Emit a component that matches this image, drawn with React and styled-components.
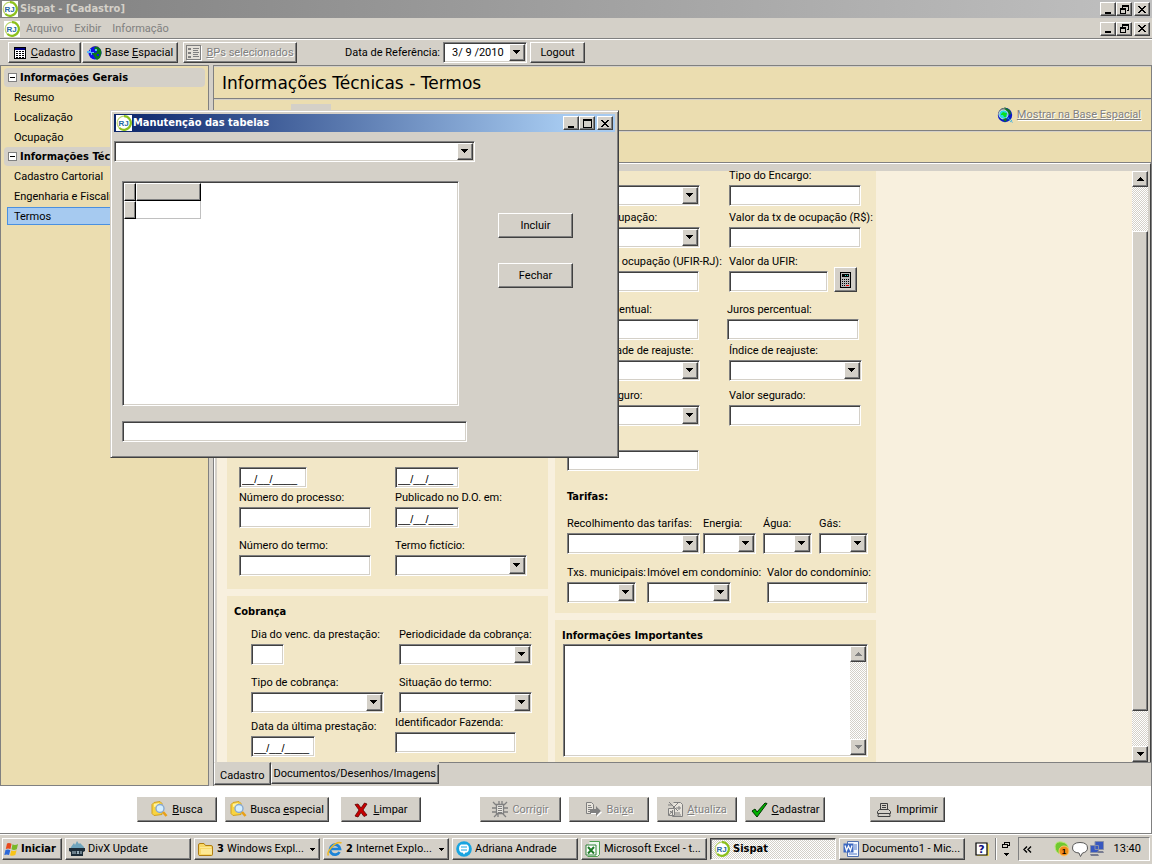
import React from 'react';
import styled, { createGlobalStyle, css } from 'styled-components';

const face = '#d4d0c8';
const sand = '#ebddb0';
const uiFont = 'Roboto, "Liberation Sans", sans-serif';
const boldFont = '"DejaVu Sans Condensed", "DejaVu Sans", sans-serif';

const GlobalStyle = createGlobalStyle`
  *, *::before, *::after {
    box-sizing: border-box;
  }

  body {
    margin: 0;
    background: ${face};
    color: #000;
    font: 11px/14px ${uiFont};
  }

  button, input, select, textarea {
    font: inherit;
    color: inherit;
    border-radius: 0;
    margin: 0;
  }
`;

const raised = css`
  border: 1px solid;
  border-color: #fff #404040 #404040 #fff;
  box-shadow: inset -1px -1px 0 #808080;
  background: ${face};
`;

const sunken = css`
  border: 1px solid;
  border-color: #808080 #fff #fff #808080;
  box-shadow: inset 1px 1px 0 #404040, inset -1px -1px 0 ${face};
  background: #fff;
`;

const checker = css`
  background: repeating-conic-gradient(#fff 0% 25%, ${face} 0% 50%) 0 0 / 2px 2px;
`;

const Screen = styled.div`
  display: flex;
  flex-direction: column;
  height: 100vh;
  min-height: 640px;
  position: relative;
  overflow: hidden;
`;

/* ---------- window chrome ---------- */

const TitleBar = styled.header`
  display: flex;
  align-items: center;
  height: 18px;
  padding: 0 2px;
  gap: ${props => props.$active ? 1 : 2}px;
  background: ${props => props.$active
    ? 'linear-gradient(90deg, #0a246a, #a6caf0 90%)'
    : 'linear-gradient(90deg, #808080, #c0c0c0)'};
  color: ${props => props.$active ? '#fff' : face};
`;

const TitleText = styled.h1`
  flex: 1;
  margin: 0;
  font: bold 11px/18px ${boldFont};
`;

const WindowButtons = styled.div`
  display: flex;

  button:last-child {
    margin-left: 2px;
  }
`;

const WindowButton = styled.button`
  ${raised}
  width: 16px;
  height: 14px;
  padding: 0;
  display: grid;
  place-items: center;
`;

const MenuBar = styled.nav`
  display: flex;
  align-items: center;
  gap: 1px;
  height: 22px;
  padding: 0 2px 0 4px;
  border-bottom: 1px solid #fff;
  box-shadow: inset 0 -1px 0 #808080;
`;

const MenuItem = styled.button`
  border: 0;
  padding: 0 5px;
  background: none;
  color: #808080;
`;

const Spacer = styled.div`
  flex: 1;
`;

const Toolbar = styled.div`
  display: flex;
  align-items: center;
  height: 25px;
  padding-left: 8px;
`;

const Button = styled.button`
  ${raised}
  display: inline-flex;
  align-items: center;
  justify-content: center;
  flex: none;
  gap: ${props => props.$gap || 5}px;
  width: ${props => props.$width}px;
  height: ${props => props.$height || 25}px;
  padding: 0;
  white-space: nowrap;

  &:disabled {
    color: #808080;
    text-shadow: 1px 1px 0 #fff;
  }
`;

const ToolGroup = styled.div`
  display: flex;
  align-items: center;
  gap: ${props => props.$gap || 1}px;
  margin-left: ${props => props.$space || 0}px;
`;

/* ---------- form controls ---------- */

const Field = styled.label`
  display: flex;
  flex-direction: column;
  gap: 2px;
  padding-top: ${props => props.$drop ? 4 : 0}px;
  white-space: nowrap;
`;

const TextInput = styled.input`
  ${sunken}
  width: ${props => props.$width}px;
  height: 21px;
  padding: 3px 2px 1px;
  font: 11px/15px "Liberation Sans", sans-serif;
`;

const SelectBox = styled.span`
  display: block;
  position: relative;
  width: ${props => props.$width}px;
  height: 21px;

  svg {
    ${raised}
    position: absolute;
    top: 2px;
    right: 2px;
    width: 16px;
    height: 17px;
    pointer-events: none;
  }
`;

const NativeSelect = styled.select`
  ${sunken}
  appearance: none;
  display: block;
  width: 100%;
  height: 100%;
  padding: 0 20px 0 8px;
  outline: 0;
`;

const Select = ({ width, options = [''], label, id }) => (
  <SelectBox $width={width}>
    <NativeSelect aria-label={label} id={id}>
      {options.map(o => <option key={o}>{o}</option>)}
    </NativeSelect>
    <svg viewBox="0 0 14 15" shapeRendering="crispEdges"><path d="M3 5h7v1h-1v1h-1v1h-1v1h-1v-1h-1v-1h-1v-1h-1z" /></svg>
  </SelectBox>
);

/* ---------- body ---------- */

const Main = styled.main`
  display: grid;
  grid-template-columns: 209px minmax(0, 1fr);
  column-gap: 4px;
  flex: 1;
  min-height: 0;
`;

const Sidebar = styled.aside`
  border: 1px solid #808080;
  background: ${sand};
  padding: 2px 3px;
`;

const NavGroup = styled.nav`
  margin-bottom: -1px;
`;

const GroupTitle = styled.h2`
  display: flex;
  align-items: center;
  gap: 3px;
  height: 19px;
  margin: 0;
  padding-left: 4px;
  border-radius: 4px;
  background: ${face};
  font: bold 11px/14px ${boldFont};
  white-space: nowrap;
`;

const NavItem = styled.a`
  display: block;
  height: 18px;
  margin: 1px 0 2px 3px;
  padding: 0 6px;
  border: 1px solid ${props => props.$selected ? '#4a90e0' : 'transparent'};
  background: ${props => props.$selected ? '#a6caf0' : 'none'};
  color: #000;
  line-height: 17px;
  text-decoration: none;
  white-space: nowrap;
`;

const Content = styled.section`
  display: flex;
  flex-direction: column;
  min-height: 0;
  border: 1px solid #808080;
  border-bottom: 0;
`;

const Band = styled.div`
  display: flex;
  align-items: center;
  gap: 4px;
  height: 32px;
  padding: 0 10px 0 8px;
  background: ${sand};
  border-bottom: 1px solid #808080;
  box-shadow: inset 0 1px 0 ${face};
`;

const TitleBand = styled(Band)`
  height: 33px;
  padding-top: 2px;
`;

const PageTitle = styled.h2`
  margin: 0;
  font: 17px/24px "DejaVu Sans", sans-serif;
`;

const BandTile = styled.span`
  align-self: flex-start;
  width: 40px;
  height: 26px;
  margin: 5px 0 0 69px;
  background: ${face};
`;

const MapLink = styled.a`
  color: #808080;
  text-shadow: 1px 1px 0 #fff;
`;

const FormPane = styled.div`
  display: flex;
  flex: 1;
  min-height: 0;
  border-top: 1px solid #fff;
  border-left: 1px solid #fff;
  border-right: 1px solid #404040;
  padding: 7px 2px 0;
`;

const Form = styled.form`
  display: flex;
  align-items: stretch;
  gap: 7px;
  flex: 1;
  min-width: 0;
  padding-left: 10px;
  background: #f8f0de;
  overflow: hidden;
`;

const Column = styled.div`
  display: flex;
  flex-direction: column;
  flex: none;
  gap: 7px;
  width: 321px;
  margin-top: -2px;
`;

const Card = styled.div`
  display: flex;
  flex-direction: column;
  justify-content: ${props => props.$end ? 'flex-end' : 'flex-start'};
  flex: ${props => props.$grow ? 1 : 'none'};
  min-height: ${props => props.$tall ? 420 : 0}px;
  padding: ${props => props.$pad};
  background: #f2e7c7;
`;

const CardTitle = styled.h3`
  margin: ${props => props.$space || 0}px 0 0;
  font: bold 11px/14px ${boldFont};
`;

const Row = styled.div`
  display: grid;
  grid-template-columns: ${props => props.$cols};
  align-items: ${props => props.$top ? 'start' : 'end'};
  margin-top: ${props => props.$space || 0}px;
  margin-left: ${props => props.$indent || 0}px;
`;

const Memo = styled.div`
  ${sunken}
  display: flex;
  width: 305px;
  height: 113px;
  margin: 1px 0 0 1px;
  padding: 1px;

  textarea {
    flex: 1;
    min-width: 0;
    border: 0;
    padding: 2px;
    resize: none;
    background: none;
  }
`;

const ScrollTrack = styled.div`
  ${checker}
  display: flex;
  flex-direction: column;
  justify-content: space-between;
  width: 16px;
`;

const ScrollButton = styled.button`
  ${raised}
  width: 16px;
  height: 16px;
  padding: 0;
  display: grid;
  place-items: center;
`;

const ScrollThumb = styled.div`
  ${raised}
  flex: 1;
  margin-top: 44px;
  margin-bottom: 35px;
`;

const ScrollBar = ({ thumb, disabled }) => {
  const color = disabled ? '#808080' : '#000';
  return (
    <ScrollTrack>
      <ScrollButton type="button" disabled={disabled} aria-label="▲">
        <svg width="7" height="4" shapeRendering="crispEdges"><path fill={color} d="M3 0h1v1h1v1h1v1h1v1H0V3h1V2h1V1h1z" /></svg>
      </ScrollButton>
      {thumb && <ScrollThumb />}
      <ScrollButton type="button" disabled={disabled} aria-label="▼">
        <svg width="7" height="4" shapeRendering="crispEdges"><path fill={color} d="M0 0h7v1H6v1H5v1H4v1H3V3H2V2H1V1H0z" /></svg>
      </ScrollButton>
    </ScrollTrack>
  );
};

const Tabs = styled.div`
  display: flex;
  align-items: flex-start;
  height: 24px;
`;

const Tab = styled.button`
  flex: none;
  padding: ${props => props.$active ? '4px 5px 0' : '0 2px'};
  background: ${face};
  border: 1px solid;
  border-color: ${face} #404040 #404040 #fff;
  box-shadow: inset -1px -1px 0 #808080;
  height: ${props => props.$active ? 23 : 20}px;
  margin-top: ${props => props.$active ? 0 : 2}px;
`;

const TabRest = styled.div`
  flex: 1;
  border-top: 1px solid #808080;
  box-shadow: inset 0 1px 0 #404040;
`;

const Footer = styled.footer`
  display: flex;
  align-items: center;
  height: 48px;
  padding-left: 137px;
  background: #fff;
  border-bottom: 1px solid #808080;
  border-right: 1px solid #808080;

  button {
    border-top-color: ${face};
    border-left-color: ${face};
  }
`;

/* ---------- dialog ---------- */

const Dialog = styled.div`
  position: absolute;
  left: 110px;
  top: 110px;
  width: 509px;
  padding: 3px;
  border: 1px solid;
  border-color: ${face} #404040 #404040 ${face};
  box-shadow: inset 1px 1px 0 #fff, inset -1px -1px 0 #808080;
  background: ${face};
`;

const DialogBody = styled.div`
  padding: 9px 0 12px;
`;

const DialogMiddle = styled.div`
  display: flex;
  gap: 39px;
  padding: 19px 0 15px 8px;
`;

const DialogActions = styled.div`
  display: flex;
  flex-direction: column;
  gap: 25px;
  padding-top: 32px;
`;

const DialogFoot = styled.div`
  padding-left: 8px;
`;

const GridBox = styled.div`
  ${sunken}
  width: 337px;
  height: 225px;
  padding: 1px;
`;

const Grid = styled.table`
  border-collapse: separate;
  border-spacing: 0;

  th {
    ${raised}
    height: 18px;
    padding: 0;
    border-color: #fff #000 #000 #fff;
  }

  th:first-child {
    width: 12px;
  }

  th + th {
    width: 65px;
  }

  td {
    padding: 0;
    border: solid #c0c0c0;
    border-width: 0 1px 1px 0;
  }
`;

/* ---------- taskbar ---------- */

const Taskbar = styled.div`
  display: flex;
  align-items: center;
  height: 30px;
  padding: 0 2px;
  gap: 3px;
  box-shadow: inset 0 1px 0 #fff;
`;

const Task = styled.button`
  ${raised}
  ${props => props.$pressed && css`
    border-color: #404040 #fff #fff #404040;
    box-shadow: inset 1px 1px 0 #808080;
    ${checker}
  `}
  display: flex;
  align-items: center;
  flex: 0 1 126px;
  min-width: 0;
  gap: 3px;
  height: 22px;
  padding: 0 4px 0 3px;
  white-space: nowrap;

  b {
    font: bold 11px/14px ${boldFont};
  }

  svg {
    flex: none;
  }

  span {
    flex: 1;
    overflow: hidden;
    text-align: left;
  }
`;

const StartButton = styled(Task)`
  flex: none;
  width: 60px;
  padding: 0 1px;
  gap: 1px;
`;

const TrayTools = styled.div`
  display: flex;
  align-items: center;
  flex: 1;
  justify-content: flex-end;
  gap: 5px;
`;

const Divider = styled.i`
  width: 2px;
  height: 22px;
  border-left: 1px solid #808080;
  border-right: 1px solid #fff;
`;

const Tray = styled.div`
  display: flex;
  align-items: center;
  gap: 2px;
  width: 132px;
  height: 24px;
  margin-left: 4px;
  padding: 0 8px 0 4px;
  border: 1px solid;
  border-color: #808080 #fff #fff #808080;
`;

const Clock = styled.time`
  margin-left: 6px;
  font-size: 11px;
`;

/* ---------- icons ---------- */

const LogoIcon = ({ bare }) => (
  <svg width="16" height="16" viewBox="0 0 16 16">
    {!bare && <rect width="16" height="16" fill="#fff" />}
    <circle cx="8" cy="8" r="6.8" fill="#fff" stroke="#bcd670" strokeWidth="1.2" />
    <path d="M8 1.2A6.8 6.8 0 1 1 3.400 13" fill="none" stroke="#8cc01c" strokeWidth="2.2" />
    <text x="7.500" y="10.800" textAnchor="middle" fontFamily="Liberation Sans" fontWeight="bold" fontSize="8" fill="#2868a4">RJ</text>
  </svg>
);

const glyphs = {
  min: <path d="M2 8h6v2H2z" />,
  max: <path fillRule="evenodd" d="M1 1h9v9H1zM2 3v6h7V3z" />,
  restore: <path fillRule="evenodd" d="M3 1h7v6H8V6h1V3H4v1H3zM1 4h6v6H1zM2 6v3h4V6z" />,
  close: <path d="M1 2h2v1h1v1h2V3h1V2h2v1H8v1H7v1H6v1h1v1h1v1h1v1H7V8H6V7H4v1H3v1H1V8h1V7h1V6h1V5H3V4H2V3H1z" />,
};

const Controls = ({ middle }) => (
  <WindowButtons>
    {['min', middle, 'close'].map(name => (
      <WindowButton key={name} type="button" aria-label={name}>
        <svg width="11" height="11" viewBox="0 0 11 11" shapeRendering="crispEdges">{glyphs[name]}</svg>
      </WindowButton>
    ))}
  </WindowButtons>
);

const TableIcon = () => (
  <svg width="12" height="12" shapeRendering="crispEdges">
    <path fill="#fff" d="M0 0h12v12H0z" />
    <path fill="#000080" d="M0 0h12v3H0z" />
    <path fill="none" stroke="#000" d="M.5 .5h11v11H.5z" />
    <path fill="#000" d="M2 4h2v1H2zM5 4h2v1H5zM8 4h2v1H8zM2 6h2v1H2zM5 6h2v1H5zM8 6h2v1H8zM2 8h2v1H2zM5 8h2v1H5zM8 8h2v1H8zM2 10h2v1H2zM5 10h2v1H5zM8 10h2v1H8z" />
  </svg>
);

const GlobeIcon = () => (
  <svg width="16" height="16" viewBox="0 0 16 16">
    <path fill="#585858" d="M3 4Q6 0 11 1.500l3 3-1 1H4z" />
    <circle cx="8" cy="8" r="6.500" fill="#1010e8" />
    <path fill="#087818" d="M8 2l3 0 3 3 .5 3-1.500 5-3 2-2-2-1.500-3L5 9l1-2 2 1 2-1-1-2-2-1z" />
    <path fill="#58b8f8" d="M0 6h3V4h1v3h3v1H5v2H4V8H0zM8 4h2v2H8z" />
    <path fill="#1010e8" d="M10 9h2v2h-2z" />
  </svg>
);

const GlobeSearchIcon = () => (
  <svg width="16" height="16" viewBox="0 0 16 16">
    <circle cx="8" cy="8" r="7.200" fill="#0818c8" />
    <path fill="#107820" d="M4 2l4-1.500L13 3l1 4-2 1-2-4-6 1z" />
    <path fill="#808080" d="M1 8Q1 2 7 1l2 1-6 4z" />
    <circle cx="6.500" cy="7.500" r="4.500" fill="#28d8e0" stroke="#c8dce0" />
    <path fill="#08e020" d="M4 7l2-2 3 1h1l-1 4H7L6 8H4z" />
    <path fill="#107820" d="M6 12l3-1 1 2-2 2z" />
    <path stroke="#18a8e8" strokeWidth="2" strokeDasharray="1 1" d="M11 11l4.500 4.500" />
  </svg>
);

const ListIcon = () => (
  <svg width="16" height="16" shapeRendering="crispEdges">
    <path d="M1.5 1.5h14v14h-14z" fill="none" stroke="#fff" />
    <path d="M.5 .5h14v14H.5z" fill="#e4e0d8" stroke="#808080" strokeWidth="1" />
    <path fill="#808080" d="M2 3h3v2H2zM2 7h3v2H2zM2 11h3v2H2zM7 3h6v1H7zM7 5h5v1H7zM7 7h6v1H7zM7 9h5v1H7zM7 11h6v1H7z" />
  </svg>
);

const SearchIcon = () => (
  <svg width="17" height="17" viewBox="0 0 17 17">
    <path d="M3 1.500l6-1 2 2v11l-8 1-2-2v-9z" fill="#f8d440" stroke="#d0a020" />
    <path d="M3 3l5-1v3L3 6z" fill="#fff2a0" />
    <circle cx="9" cy="7.500" r="4" fill="#d4efff" stroke="#88a8d0" strokeWidth="1.400" />
    <path d="M12 11l3.500 4" stroke="#e8a018" strokeWidth="2.600" />
  </svg>
);

const CrossIcon = () => (
  <svg width="14" height="16" viewBox="0 0 14 16">
    <path d="M1 2.500l3-.5 3 4 3.500-5 2.500 1-4 6 4 5-3 1.500-3-4-3 4.500-3-1 4-6z" fill="#c80000" stroke="#600000" strokeWidth=".8" />
  </svg>
);

const CheckIcon = () => (
  <svg width="17" height="16" viewBox="0 0 17 16">
    <path d="M1 9l3-2 2 3 8-9 2 .5L6 15z" fill="#00b000" stroke="#003800" />
  </svg>
);

const GearPageIcon = () => (
  <svg width="16" height="17" viewBox="0 0 16 17">
    <path fill="#eceae4" stroke="#808080" strokeWidth="1.300" d="M4.500 3.500h7v9h-7z" />
    <path fill="none" stroke="#808080" strokeWidth="1.300" d="M1 1l3 3M15 1l-3 3M0 7h4M12 7h4M0 11h4M12 11h4M2 16l3-3M14 16l-3-3M7 0v3M10 0v3M6 16v-3" />
    <path stroke="#808080" d="M6 5.500h4M6 7.500h4M6 9.500h4M6 11.500h4" />
  </svg>
);

const ExportIcon = () => (
  <svg width="17" height="15" viewBox="0 0 17 15">
    <path fill="#e8e4dc" stroke="#808080" d="M1.500 .5h5l2 2v9h-7z" />
    <path stroke="#808080" d="M3 3.500h3M3 5.500h4M3 7.500h4M3 9.500h2" />
    <path fill="#fff" d="M6 8h6V5l5 5.500-5 4.500v-3H6z" />
    <path fill="#808080" d="M5 7h6V4l5 5-5 5v-3H5z" />
  </svg>
);

const RefreshPageIcon = () => (
  <svg width="17" height="17" viewBox="0 0 17 17">
    <path fill="#e8e4dc" stroke="#808080" d="M6.500 1.500h7l2 2v12h-10v-6M1.500 7.500h6v7h-6z" />
    <path fill="none" stroke="#808080" d="M2 1l9 9M11 2L5 8M1 4h4M8 12h5M9 7h5M12 5v4M3 10l3 3M6 9l-4 5M8 14h6" />
  </svg>
);

const PrinterIcon = () => (
  <svg width="14" height="14" viewBox="0 0 14 14" fill="none" stroke="#404040">
    <path d="M3.500 6.500v-6h7v6M5 2.500h4M5 4.500h4M2.500 6.500h9l2 2v2H.5v-2zM2.500 10.500L1 11.500v2h12v-2l-1.500-1" />
  </svg>
);

const CalculatorIcon = () => (
  <svg width="11" height="16" shapeRendering="crispEdges">
    <rect x=".5" y=".5" width="10" height="15" rx="1" fill="#b8b8b8" stroke="#000" />
    <path fill="#000" d="M2 2h7v3H2z" />
    <path fill="#20d8c8" d="M5 3h1v1H5zM7 3h1v1H7z" />
    <path fill="#000" d="M2 7h1v1H2zM4 7h1v1H4zM6 7h1v1H6zM8 7h1v1H8zM2 9h1v1H2zM4 9h1v1H4zM6 9h1v1H6zM8 9h1v1H8zM2 11h1v1H2zM4 11h1v1H4zM6 11h1v1H6zM8 11h1v1H8zM2 13h1v1H2zM4 13h1v1H4z" />
    <path fill="#e00" d="M6 13h3v1H6z" />
  </svg>
);

const ToggleIcon = () => (
  <svg width="9" height="9" shapeRendering="crispEdges">
    <path fill="#fff" stroke="#808080" d="M.5 .5h8v8h-8z" />
    <path fill="#000" d="M2 4h5v1H2z" />
  </svg>
);

const WindowsIcon = () => (
  <svg width="16" height="15" viewBox="0 0 16 15">
    <path fill="#e8481c" d="M3 1.500q2-1 4.500.3L6.500 7Q4 5.800 1.800 7z" />
    <path fill="#78b828" d="M8.500 2.300Q11 3.600 14 2l-1.200 5.200Q10 8.500 7.500 7.300z" />
    <path fill="#2c68d8" d="M1.500 8Q4 7 6.300 8.200L5 13Q2.800 12 .3 13z" />
    <path fill="#f8c418" d="M7.300 8.600q2.500 1 5.300-.3L11.300 13Q8.500 14.500 6 13.300z" />
  </svg>
);

const DivxIcon = () => (
  <svg width="16" height="16" viewBox="0 0 16 16">
    <path fill="#6fa4bc" d="M2 6l3-4 1 2 2-4 2 3 1-1 4 4v3H1z" />
    <path fill="#1c2c38" d="M0 7h16v3l-2 1v4H2v-4l-2-1z" />
    <path fill="none" stroke="#b8d0dc" d="M4 10v3M6 10v3M8 10l2 3M10 10l-2 3M12 10v3" />
  </svg>
);

const FolderIcon = () => (
  <svg width="16" height="15" viewBox="0 0 16 15">
    <path fill="#f8d868" stroke="#b07c10" d="M.5 3q0-1.500 1.500-1.500h4l1.500 2H13q1.500 0 1.500 1.500v7.500q0 1-1 1H2q-1.500 0-1.500-1z" />
    <path fill="#fff0a8" d="M2 5h11v1H2zM3 7h11v5H3z" opacity=".7" />
  </svg>
);

const ExplorerIcon = () => (
  <svg width="16" height="16" viewBox="0 0 16 16" fill="none">
    <path d="M12.500 11A5 5 0 1 1 13 8H4" stroke="#1c84d8" strokeWidth="2.700" />
    <path d="M1.500 14.500C-1 11 9-1 14.500 2" stroke="#f0b820" strokeWidth="1.500" />
  </svg>
);

const ChatIcon = () => (
  <svg width="16" height="16" viewBox="0 0 16 16">
    <circle cx="8" cy="8" r="7.800" fill="#18a4e0" />
    <path d="M5 3.500h6q2 1 2 4t-2 4H9.500L8 13.500l-1.500-2H5q-2-1-2-4t2-4z" fill="#fff" />
    <path d="M5 6h6M5 9h6" stroke="#18a4e0" />
  </svg>
);

const ExcelIcon = () => (
  <svg width="16" height="16" viewBox="0 0 16 16">
    <path d="M4.500 .5h10v13l-2 2h-10" fill="#eef8ee" stroke="#50a050" />
    <path d="M1 4h10v10H1z" fill="#fff" stroke="#308038" />
    <path d="M3 6l6 6.500M9 6l-6 6.500" stroke="#207c28" strokeWidth="2" />
  </svg>
);

const WordIcon = () => (
  <svg width="16" height="16" viewBox="0 0 16 16">
    <path d="M4.500 .5h11v15h-11z" fill="#f4f8ff" stroke="#5070b0" />
    <path d="M11 4h3M11 6h3M11 8h3M6 13h8" stroke="#5078c8" />
    <path d="M.5 2.500h10v9H.5z" fill="#3c68c0" />
    <path d="M2 4.500l1.500 5L5.500 5l2 4.500L9 4.500" fill="none" stroke="#fff" strokeWidth="1.300" />
  </svg>
);

const Caret = () => (
  <svg width="5" height="3" shapeRendering="crispEdges"><path d="M0 0h5v1H4v1H3v1H2V2H1V1H0z" /></svg>
);

const HelpIcon = () => (
  <svg width="15" height="15" viewBox="0 0 15 15">
    <path d="M2 2h12v12H2z" fill="#f0dc60" />
    <path d="M1 1h11v12H1z" fill="#fff" stroke="#000" strokeWidth="1.200" />
    <text x="6.500" y="11" textAnchor="middle" fontFamily="DejaVu Sans" fontWeight="bold" fontSize="11" fill="#101080">?</text>
  </svg>
);

const GripIcon = () => (
  <svg width="9" height="16" viewBox="0 0 9 16" shapeRendering="crispEdges">
    <path fill="none" stroke="#000" d="M2.500 3V1.500h5v3H6M.5 3.500h5v3h-5z" />
    <path d="M2 12h5v1H6v1H5v1H4v-1H3v-1H2z" />
  </svg>
);

const ChevronsIcon = () => (
  <svg width="9" height="7" viewBox="0 0 9 7" fill="none" stroke="#000" strokeWidth="1.400">
    <path d="M4 .5l-3 3 3 3M8 .5l-3 3 3 3" />
  </svg>
);

const TrayIcons = () => (
  <svg width="52" height="18" viewBox="0 0 52 18">
    <path fill="#70c830" stroke="#b8e878" d="M1 6q1-5 7-4 7 1 6 8-2 5-7 4Q1 13 1 6z" />
    <circle cx="10" cy="11" r="5" fill="#f08c18" stroke="#f8c878" />
    <text x="10" y="14" textAnchor="middle" fontFamily="Liberation Sans" fontWeight="bold" fontSize="8">1</text>
    <path fill="#fff" stroke="#585858" d="M18.500 8q0-5.500 7.500-5.500T33.500 8q0 4-5 5l-2 3.500L25 13q-6.500-.5-6.500-5z" />
    <path fill="#3858c0" stroke="#8890a8" d="M41 1.500h8.500v8H41zM36.500 5.500h8v7h-8z" />
    <path fill="#787c90" d="M43 11h6l1 2h-6zM36 14h8l1 2h-8z" />
  </svg>
);

/* ---------- page ---------- */

const emptyDate = '__/__/____';

const DateInput = ({ width = 64, label }) => (
  <TextInput $width={width} defaultValue={emptyDate} aria-label={label} />
);

const LabeledInput = ({ label, width = 132 }) => (
  <Field>{label}<TextInput $width={width} /></Field>
);

const LabeledSelect = ({ label, width = 133 }) => (
  <Field>{label}<Select width={width} /></Field>
);

const navGroups = [
  { title: 'Informações Gerais', items: ['Resumo', 'Localização', 'Ocupação'] },
  { title: 'Informações Técnicas', items: ['Cadastro Cartorial', 'Engenharia e Fiscalização', 'Termos'] },
];

const tasks = [
  { icon: <DivxIcon />, text: 'DivX Update' },
  { icon: <FolderIcon />, count: 3, text: 'Windows Expl...' },
  { icon: <ExplorerIcon />, count: 2, text: 'Internet Explo...' },
  { icon: <ChatIcon />, text: 'Adriana Andrade' },
  { icon: <ExcelIcon />, text: 'Microsoft Excel - t...' },
  { icon: <LogoIcon bare />, text: 'Sispat', pressed: true },
  { icon: <WordIcon />, text: 'Documento1 - Mic...' },
];

const TermForm = () => (
  <Form>
    <Column>
      <Card $tall $end $pad="0 0 13px 12px">
        <Row $cols="156px 132px">
          <DateInput width={68} label="Data" />
          <DateInput label="Data" />
        </Row>
        <Row $cols="156px 132px" $space={3}>
          <LabeledInput label="Número do processo:" />
          <Field>Publicado no D.O. em:<DateInput /></Field>
        </Row>
        <Row $cols="156px 132px" $space={11}>
          <LabeledInput label="Número do termo:" />
          <LabeledSelect label="Termo fictício:" width={132} />
        </Row>
      </Card>
      <Card $grow $pad="9px 0 0 7px">
        <CardTitle>Cobrança</CardTitle>
        <Row $cols="148px 133px" $space={9} $indent={17}>
          <LabeledInput label="Dia do venc. da prestação:" width={33} />
          <LabeledSelect label="Periodicidade da cobrança:" />
        </Row>
        <Row $cols="148px 133px" $space={11} $indent={17}>
          <LabeledSelect label="Tipo de cobrança:" />
          <LabeledSelect label="Situação do termo:" />
        </Row>
        <Row $cols="144px 132px" $space={3} $indent={17} $top>
          <Field $drop>Data da última prestação:<DateInput /></Field>
          <LabeledInput label="Identificador Fazenda:" width={121} />
        </Row>
      </Card>
    </Column>
    <Column>
      <Card $pad="0 0 10px 12px">
        <Row $cols="162px 133px">
          <Select width={133} label="Encargo" />
          <LabeledInput label="Tipo do Encargo:" />
        </Row>
        <Row $cols="162px 133px" $space={5}>
          <LabeledSelect label="Tipo de ocupação:" />
          <LabeledInput label="Valor da tx de ocupação (R$):" />
        </Row>
        <Row $cols="162px 105px 23px" $space={7}>
          <LabeledInput label="Valor tx de ocupação (UFIR-RJ):" />
          <LabeledInput label="Valor da UFIR:" width={99} />
          <Button type="button" $width={23} aria-label="Calcular"><CalculatorIcon /></Button>
        </Row>
        <Row $cols="160px 133px" $space={11}>
          <LabeledInput label="Multa percentual:" />
          <LabeledInput label="Juros percentual:" />
        </Row>
        <Row $cols="162px 133px" $space={4}>
          <LabeledSelect label="Periodicidade de reajuste:" />
          <LabeledSelect label="Índice de reajuste:" />
        </Row>
        <Row $cols="162px 133px" $space={8}>
          <LabeledSelect label="Tipo de seguro:" />
          <LabeledInput label="Valor segurado:" />
        </Row>
        <Row $cols="162px" $space={24}>
          <TextInput $width={132} aria-label="Valor" />
        </Row>
        <CardTitle $space={19}>Tarifas:</CardTitle>
        <Row $cols="136px 60px 56px 49px" $space={13}>
          <LabeledSelect label="Recolhimento das tarifas:" />
          <LabeledSelect label="Energia:" width={53} />
          <LabeledSelect label="Água:" width={49} />
          <LabeledSelect label="Gás:" width={49} />
        </Row>
        <Row $cols="80px 120px 101px" $space={12}>
          <LabeledSelect label="Txs. municipais:" width={69} />
          <LabeledSelect label="Imóvel em condomínio:" width={84} />
          <LabeledInput label="Valor do condomínio:" width={101} />
        </Row>
      </Card>
      <Card $grow $pad="9px 0 0 7px">
        <CardTitle as="label" htmlFor="info">Informações Importantes</CardTitle>
        <Memo>
          <textarea id="info" />
          <ScrollBar disabled />
        </Memo>
      </Card>
    </Column>
  </Form>
);

const TablesDialog = () => (
  <Dialog role="dialog" aria-labelledby="dialog-title">
    <TitleBar $active>
      <LogoIcon />
      <TitleText id="dialog-title" as="h2">Manutenção das tabelas</TitleText>
      <Controls middle="max" />
    </TitleBar>
    <DialogBody>
      <Select width={361} label="Tabela" />
      <DialogMiddle>
        <GridBox>
          <Grid>
            <thead><tr><th /><th /></tr></thead>
            <tbody><tr><th /><td /></tr></tbody>
          </Grid>
        </GridBox>
        <DialogActions>
          <Button $width={75}>Incluir</Button>
          <Button $width={75}>Fechar</Button>
        </DialogActions>
      </DialogMiddle>
      <DialogFoot>
        <TextInput $width={345} aria-label="Item" />
      </DialogFoot>
    </DialogBody>
  </Dialog>
);

const App = () => (
  <Screen>
    <GlobalStyle />
    <TitleBar>
      <LogoIcon />
      <TitleText>Sispat - [Cadastro]</TitleText>
      <Controls middle="restore" />
    </TitleBar>
    <MenuBar>
      <LogoIcon />
      <MenuItem>Arquivo</MenuItem>
      <MenuItem>Exibir</MenuItem>
      <MenuItem>Informação</MenuItem>
      <Spacer />
      <Controls middle="restore" />
    </MenuBar>
    <Toolbar>
      <ToolGroup>
        <Button $width={73} $height={21}><TableIcon /><span><u>C</u>adastro</span></Button>
        <Button $width={96} $height={21} $gap={2}><GlobeIcon /><span>Base <u>E</u>spacial</span></Button>
      </ToolGroup>
      <ToolGroup $space={5}>
        <Button $width={114} $height={21} $gap={4} disabled><ListIcon /><span><u>B</u>Ps selecionados</span></Button>
      </ToolGroup>
      <ToolGroup $space={48} $gap={3}>
        <label htmlFor="ref-date">Data de Referência:</label>
        <Select id="ref-date" width={84} options={['3/ 9 /2010']} />
        <Button $width={55} $height={21}>Logout</Button>
      </ToolGroup>
    </Toolbar>

    <Main>
      <Sidebar>
        {navGroups.map(group => (
          <NavGroup key={group.title}>
            <GroupTitle><ToggleIcon />{group.title}</GroupTitle>
            {group.items.map(item => (
              <NavItem key={item} href="#" $selected={item === 'Termos'}>{item}</NavItem>
            ))}
          </NavGroup>
        ))}
      </Sidebar>
      <Content>
        <TitleBand><PageTitle>Informações Técnicas - Termos</PageTitle></TitleBand>
        <Band>
          <BandTile />
          <Spacer />
          <GlobeSearchIcon />
          <MapLink href="#">Mostrar na Base Espacial</MapLink>
        </Band>
        <Band />
        <FormPane>
          <TermForm />
          <ScrollBar thumb />
        </FormPane>
        <Tabs>
          <Tab $active>Cadastro</Tab>
          <Tab>Documentos/Desenhos/Imagens</Tab>
          <TabRest />
        </Tabs>
      </Content>
    </Main>

    <Footer>
      <ToolGroup $gap={8}>
        <Button $width={80} $gap={4}><SearchIcon /><span><u>B</u>usca</span></Button>
        <Button $width={104} $gap={3}><SearchIcon /><span>Busca <u>e</u>special</span></Button>
      </ToolGroup>
      <ToolGroup $space={12}>
        <Button $width={80}><CrossIcon /><span><u>L</u>impar</span></Button>
      </ToolGroup>
      <ToolGroup $space={59} $gap={8}>
        <Button $width={81} $gap={4} disabled><GearPageIcon />Corrigir</Button>
        <Button $width={80} disabled><ExportIcon /><span>Bai<u>x</u>a</span></Button>
        <Button $width={80} $gap={3} disabled><RefreshPageIcon /><span><u>A</u>tualiza</span></Button>
        <Button $width={80} $gap={4}><CheckIcon /><span><u>C</u>adastrar</span></Button>
      </ToolGroup>
      <ToolGroup $space={45}>
        <Button $width={75} $gap={5}><PrinterIcon />Imprimir</Button>
      </ToolGroup>
    </Footer>

    <Taskbar>
      <StartButton><WindowsIcon /><b>Iniciar</b></StartButton>
      {tasks.map(task => (
        <Task key={task.text} $pressed={task.pressed}>
          {task.icon}
          {task.count && <b>{task.count}</b>}
          <span>{task.pressed ? <b>{task.text}</b> : task.text}</span>
          {task.count && <Caret />}
        </Task>
      ))}
      <TrayTools>
        <HelpIcon />
        <Divider />
        <GripIcon />
      </TrayTools>
      <Tray>
        <ChevronsIcon />
        <Spacer />
        <TrayIcons />
        <Clock>13:40</Clock>
      </Tray>
    </Taskbar>

    <TablesDialog />
  </Screen>
);

export default App;
